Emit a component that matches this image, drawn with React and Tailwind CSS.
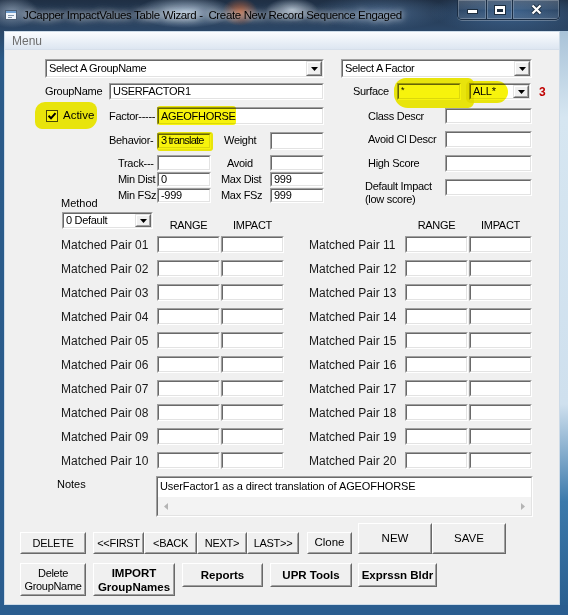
import React from "react";

const SM = "text-[11px] tracking-[-0.3px] leading-none whitespace-nowrap";

function Sunken({ className = "", innerClass = "", children }) {
  return (
    <div className={`shrink-0 border border-t-[#a0a0a0] border-l-[#a0a0a0] border-b-white border-r-white ${className}`}>
      <div className={`w-full h-full bg-white border border-t-[#696969] border-l-[#696969] border-b-[#e3e3e3] border-r-[#e3e3e3] flex items-center overflow-hidden ${innerClass}`}>
        {children}
      </div>
    </div>
  );
}

function DropBtn() {
  return (
    <div className="h-full w-[16px] shrink-0 border border-t-[#e3e3e3] border-l-[#e3e3e3] border-b-[#696969] border-r-[#696969]">
      <div className="w-full h-full bg-[#f0f0f0] border border-t-white border-l-white border-b-[#a0a0a0] border-r-[#a0a0a0] flex items-center justify-center">
        <svg width="7" height="4" viewBox="0 0 7 4">
          <path d="M0 0H7L3.5 4Z" fill="#000" />
        </svg>
      </div>
    </div>
  );
}

function Combo({ className = "", text }) {
  return (
    <Sunken className={className} innerClass="justify-between">
      <span className={`pl-[2px] ${SM}`}>{text}</span>
      <DropBtn />
    </Sunken>
  );
}

function Field({ className = "", text = "", textClass = SM }) {
  return (
    <Sunken className={className}>
      <span className={`pl-[2px] ${textClass}`}>{text}</span>
    </Sunken>
  );
}

function Btn({ className = "", textClass = SM, children }) {
  return (
    <div className={`shrink-0 border border-t-white border-l-white border-b-[#696969] border-r-[#696969] ${className}`}>
      <div className={`w-full h-full bg-[#f0f0f0] border border-t-[#f0f0f0] border-l-[#f0f0f0] border-b-[#a0a0a0] border-r-[#a0a0a0] flex items-center justify-center text-center ${textClass}`}>
        {children}
      </div>
    </div>
  );
}

function Label({ className = "", children }) {
  return <div className={`shrink-0 ${SM} ${className}`}>{children}</div>;
}

const CAP =
  "h-full bg-[linear-gradient(180deg,rgba(255,255,255,0.18),rgba(255,255,255,0.07)_45%,rgba(255,255,255,0.01)_55%,rgba(255,255,255,0.1))] shadow-[inset_0_0_0_1px_rgba(255,255,255,0.22)]";

function TitleBar() {
  return (
    <div className="h-[31px] flex items-start">
      <svg className="ml-[5px] mt-[9px] shrink-0" width="13" height="12" viewBox="0 0 13 12">
        <rect x="0.5" y="1.5" width="11" height="9" fill="#eef4fa" stroke="#4b5d72" />
        <rect x="1" y="2" width="10" height="2" fill="#6f9fd0" />
        <rect x="3" y="6" width="6" height="1" fill="#7f93a8" />
        <rect x="3" y="8" width="4" height="1" fill="#7f93a8" />
      </svg>
      <div className="ml-[5px] mt-[8px] text-[11.5px] tracking-[-0.35px] leading-[14px] whitespace-pre text-black [text-shadow:0_0_6px_rgba(255,255,255,0.95),0_0_10px_rgba(255,255,255,0.7)]">
        JCapper ImpactValues Table Wizard -  Create New Record Sequence Engaged
      </div>
      <div className="ml-auto mr-[8px] flex h-[20px] rounded-b-[5px] border border-t-0 border-[#1a2d44] overflow-hidden shadow-[0_1px_0_rgba(255,255,255,0.25)]">
        <div className={`w-[28px] flex items-end justify-center pb-[5px] ${CAP}`}>
          <svg width="11" height="5" viewBox="0 0 11 5">
            <rect x="0.5" y="0.5" width="10" height="4" fill="#fff" stroke="#1d2e40" />
          </svg>
        </div>
        <div className={`w-[26px] border-l border-[#1a2d44] flex items-center justify-center ${CAP}`}>
          <svg width="12" height="10" viewBox="0 0 12 10">
            <rect x="0" y="0" width="12" height="10" fill="#1d2e40" />
            <rect x="1" y="1" width="10" height="8" fill="#fff" />
            <rect x="3" y="4" width="6" height="3" fill="#1d2e40" />
          </svg>
        </div>
        <div className={`w-[47px] border-l border-[#1a2d44] flex items-center justify-center ${CAP}`}>
          <svg width="13" height="11" viewBox="0 0 13 11">
            <path d="M2.5 1.5L10.5 9.5M10.5 1.5L2.5 9.5" stroke="#1d2e40" strokeWidth="4" />
            <path d="M2.5 1.5L10.5 9.5M10.5 1.5L2.5 9.5" stroke="#fff" strokeWidth="2.2" />
          </svg>
        </div>
      </div>
    </div>
  );
}

function Checkbox({ className = "" }) {
  return (
    <div className={`w-[12px] h-[12px] shrink-0 border border-[#4a4a4a] bg-white flex items-center justify-center ${className}`}>
      <svg width="10" height="10" viewBox="0 0 10 10">
        <path d="M1.5 4.8L4 7.3L8.5 2.2" stroke="#000" strokeWidth="2" fill="none" />
      </svg>
    </div>
  );
}

function TopSection() {
  return (
    <div className="flex items-start ml-[40px] h-[153px]">
      {/* left column */}
      <div className="flex flex-col w-[279px] shrink-0">
        <Combo className="w-[279px] h-[19px]" text="Select A GroupName" />
        <div className="flex items-center h-[17px] mt-[5px]">
          <Label className="w-[64px]">GroupName</Label>
          <Field className="w-[215px] h-[17px]" text="USERFACTOR1" />
        </div>
        <div className="flex items-center h-[18px] mt-[7px]">
          <div className="w-[64px] shrink-0 flex items-center">
            <Checkbox className="ml-[1px]" />
            <span className="ml-[5px] text-[11.5px] leading-none">Active</span>
          </div>
          <Label className="w-[48px]">Factor-----</Label>
          <Field className="w-[167px] h-[18px]" text="AGEOFHORSE" />
        </div>
        <div className="flex items-center h-[19px] mt-[6px]">
          <div className="w-[64px] shrink-0" />
          <Label className="w-[48px]">Behavior-</Label>
          <Field
            className="w-[54px] h-[16px]"
            text="3 translate"
            textClass="text-[11px] tracking-[-0.8px] leading-none whitespace-nowrap"
          />
          <Label className="w-[59px] pl-[13px]">Weight</Label>
          <Field className="w-[54px] h-[18px]" />
        </div>
        <div className="flex items-center h-[16px] mt-[5px]">
          <div className="w-[73px] shrink-0" />
          <Label className="w-[39px]">Track---</Label>
          <Field className="w-[54px] h-[16px]" />
          <Label className="w-[59px] pl-[16px]">Avoid</Label>
          <Field className="w-[54px] h-[16px]" />
        </div>
        <div className="flex items-center h-[15px] mt-[1px]">
          <div className="w-[73px] shrink-0" />
          <Label className="w-[39px]">Min Dist</Label>
          <Field className="w-[54px] h-[15px]" text="0" />
          <Label className="w-[59px] pl-[10px]">Max Dist</Label>
          <Field className="w-[54px] h-[15px]" text="999" />
        </div>
        <div className="flex items-start h-[15px] mt-[1px]">
          <div className="w-[73px] shrink-0 pl-[16px] pt-[10px] text-[11px] leading-none">Method</div>
          <Label className="w-[39px] self-center">Min FSz</Label>
          <Field className="w-[54px] h-[15px]" text="-999" />
          <Label className="w-[59px] pl-[10px] self-center">Max FSz</Label>
          <Field className="w-[54px] h-[15px]" text="999" />
        </div>
      </div>

      {/* right column */}
      <div className="flex flex-col ml-[17px] w-[210px] shrink-0">
        <Combo className="w-[191px] h-[19px]" text="Select A Factor" />
        <div className="flex items-center h-[17px] mt-[5px]">
          <Label className="ml-[12px] w-[44px]">Surface</Label>
          <Sunken className="w-[64px] h-[17px]" innerClass="items-start">
            <span className="pl-[2px] pt-[1px] text-[9px] leading-none">*</span>
          </Sunken>
          <Combo className="ml-[8px] w-[62px] h-[17px]" text="ALL*" />
          <span className="ml-[8px] text-[12px] font-bold text-[#c00000] leading-none">3</span>
        </div>
        <div className="flex items-center h-[16px] mt-[8px]">
          <Label className="w-[104px] pl-[27px]">Class Descr</Label>
          <Field className="w-[87px] h-[16px]" />
        </div>
        <div className="flex items-center h-[17px] mt-[7px]">
          <Label className="w-[104px] pl-[27px]">Avoid Cl Descr</Label>
          <Field className="w-[87px] h-[17px]" />
        </div>
        <div className="flex items-center h-[17px] mt-[7px]">
          <Label className="w-[104px] pl-[27px]">High Score</Label>
          <Field className="w-[87px] h-[17px]" />
        </div>
        <div className="flex items-start mt-[7px]">
          <div className="w-[104px] shrink-0 pl-[24px] text-[11px] tracking-[-0.3px] leading-[13px] pt-[1px]">
            Default Impact
            <br />
            (low score)
          </div>
          <Field className="w-[87px] h-[17px]" />
        </div>
      </div>
    </div>
  );
}

function MethodRow() {
  return (
    <div className="flex items-end h-[19px] ml-[57px]">
      <Combo className="self-start w-[91px] h-[17px]" text="0 Default" />
      <div className={`ml-[4px] w-[63px] text-center ${SM}`}>RANGE</div>
      <div className={`ml-[1px] w-[63px] text-center ${SM}`}>IMPACT</div>
      <div className={`ml-[121px] w-[63px] text-center ${SM}`}>RANGE</div>
      <div className={`ml-[1px] w-[63px] text-center ${SM}`}>IMPACT</div>
    </div>
  );
}

const pairs = [
  ["01", "11"],
  ["02", "12"],
  ["03", "13"],
  ["04", "14"],
  ["05", "15"],
  ["06", "16"],
  ["07", "17"],
  ["08", "18"],
  ["09", "19"],
  ["10", "20"],
];

function Pairs() {
  return (
    <div className="mt-[5px] ml-[56px] flex flex-col gap-[7px]">
      {pairs.map(([a, b]) => (
        <div key={a} className="flex items-center h-[17px]">
          <span className="w-[96px] shrink-0 text-[12px] leading-none text-[#1a1a1a] whitespace-nowrap">Matched Pair {a}</span>
          <Field className="w-[63px] h-[17px]" />
          <Field className="ml-[1px] w-[63px] h-[17px]" />
          <span className="ml-[25px] w-[96px] shrink-0 text-[12px] leading-none text-[#1a1a1a] whitespace-nowrap">Matched Pair {b}</span>
          <Field className="w-[63px] h-[17px]" />
          <Field className="ml-[1px] w-[63px] h-[17px]" />
        </div>
      ))}
    </div>
  );
}

function Notes() {
  return (
    <div className="mt-[7px] ml-[52px] flex items-start">
      <span className="w-[99px] shrink-0 pt-[3px] text-[11px] leading-none">Notes</span>
      <Sunken className="w-[377px] h-[41px]" innerClass="flex-col items-stretch justify-between">
        <div className="px-[2px] pt-[2px] text-[11px] tracking-[-0.1px] leading-[13px] whitespace-nowrap">
          UserFactor1 as a direct translation of AGEOFHORSE
        </div>
        <div className="h-[18px] bg-[#f3f3f3] flex items-center justify-between px-[6px]">
          <svg width="4" height="7" viewBox="0 0 4 7">
            <path d="M4 0V7L0 3.5Z" fill="#b4b4b4" />
          </svg>
          <svg width="4" height="7" viewBox="0 0 4 7">
            <path d="M0 0V7L4 3.5Z" fill="#b4b4b4" />
          </svg>
        </div>
      </Sunken>
    </div>
  );
}

function Buttons() {
  const bold = "text-[11.5px] font-bold leading-[14px] whitespace-nowrap";
  return (
    <div className="ml-[15px]">
      <div className="mt-[6px] flex items-end h-[31px]">
        <Btn className="w-[66px] h-[22px]">DELETE</Btn>
        <div className="ml-[7px] flex">
          <Btn className="w-[51px] h-[22px]">&lt;&lt;FIRST</Btn>
          <Btn className="w-[53px] h-[22px]">&lt;BACK</Btn>
          <Btn className="w-[50px] h-[22px]">NEXT&gt;</Btn>
          <Btn className="w-[52px] h-[22px]">LAST&gt;&gt;</Btn>
        </div>
        <Btn className="ml-[8px] w-[45px] h-[22px]" textClass="text-[11.5px] leading-none">Clone</Btn>
        <Btn className="ml-[6px] w-[74px] h-[31px]" textClass="text-[11.5px] leading-none">NEW</Btn>
        <Btn className="w-[74px] h-[31px]" textClass="text-[11.5px] leading-none">SAVE</Btn>
      </div>
      <div className="mt-[9px] flex items-start">
        <Btn className="w-[66px] h-[33px]" textClass="text-[11px] tracking-[-0.3px] leading-[13px]">
          Delete
          <br />
          GroupName
        </Btn>
        <Btn className="ml-[7px] w-[82px] h-[33px]" textClass={bold}>
          IMPORT
          <br />
          GroupNames
        </Btn>
        <Btn className="ml-[7px] w-[81px] h-[24px]" textClass={bold}>Reports</Btn>
        <Btn className="ml-[7px] w-[82px] h-[24px]" textClass={bold}>UPR Tools</Btn>
        <Btn className="ml-[6px] w-[79px] h-[24px]" textClass={bold}>Exprssn Bldr</Btn>
      </div>
    </div>
  );
}

export default function App() {
  return (
    <div className="relative w-[568px] h-[615px] overflow-hidden font-['Liberation_Sans',Arial,sans-serif] text-black bg-[image:radial-gradient(ellipse_26px_16px_at_12px_12px,rgba(200,215,232,0.55),transparent),radial-gradient(ellipse_50px_16px_at_185px_12px,rgba(190,210,230,0.85),transparent),radial-gradient(ellipse_18px_14px_at_240px_12px,rgba(205,105,60,0.85),transparent),radial-gradient(ellipse_26px_12px_at_292px_10px,rgba(215,228,240,0.75),transparent),radial-gradient(ellipse_70px_18px_at_380px_12px,rgba(90,125,165,0.6),transparent),radial-gradient(ellipse_80px_22px_at_510px_12px,rgba(70,115,165,0.7),transparent),linear-gradient(180deg,#1f2f44_0px,#2b4564_28px,#2a5a88_60px,#2a5d8f_615px)]">
      <TitleBar />
      <div className="flex h-[574px]">
        <div className="w-[4px] shrink-0" />
        <div className="w-[556px] h-full shrink-0 border border-[#cddbe8] bg-[#f0f0f0] flex flex-col">
          <div className="h-[18px] shrink-0 border-b border-[#d6dfea] bg-[linear-gradient(180deg,#fbfcfe,#eaf0f7_55%,#dde6f1)] flex items-center pl-[7px]">
            <span className="text-[12px] leading-none text-[#6e6e6e]">Menu</span>
          </div>
          <div className="pt-[9px]">
            <TopSection />
            <MethodRow />
            <Pairs />
            <Notes />
            <Buttons />
          </div>
        </div>
        <div className="w-[8px] shrink-0 bg-[linear-gradient(180deg,#a9c3d8_0%,#d6e6f1_15%,#cfe0ee_65%,#3b79ab_82%,#2a5f90_100%)]" />
      </div>

      {/* highlighter marks */}
      <div className="absolute left-[35px] top-[102px] w-[62px] h-[27px] rounded-[10px_8px_11px_7px] bg-[#f7f30c] mix-blend-multiply" />
      <div className="absolute left-[157px] top-[106px] w-[79px] h-[19px] rounded-[3px] bg-[#f7f30c] mix-blend-multiply" />
      <div className="absolute left-[157px] top-[132px] w-[56px] h-[19px] rounded-[3px] bg-[#f7f30c] mix-blend-multiply" />
      <div className="absolute left-[394px] top-[78px] w-[80px] h-[30px] rounded-[12px_6px_6px_14px] bg-[#f7f30c] mix-blend-multiply" />
      <div className="absolute left-[466px] top-[81px] w-[42px] h-[22px] rounded-[6px_14px_14px_6px] bg-[#f7f30c] mix-blend-multiply" />
    </div>
  );
}
